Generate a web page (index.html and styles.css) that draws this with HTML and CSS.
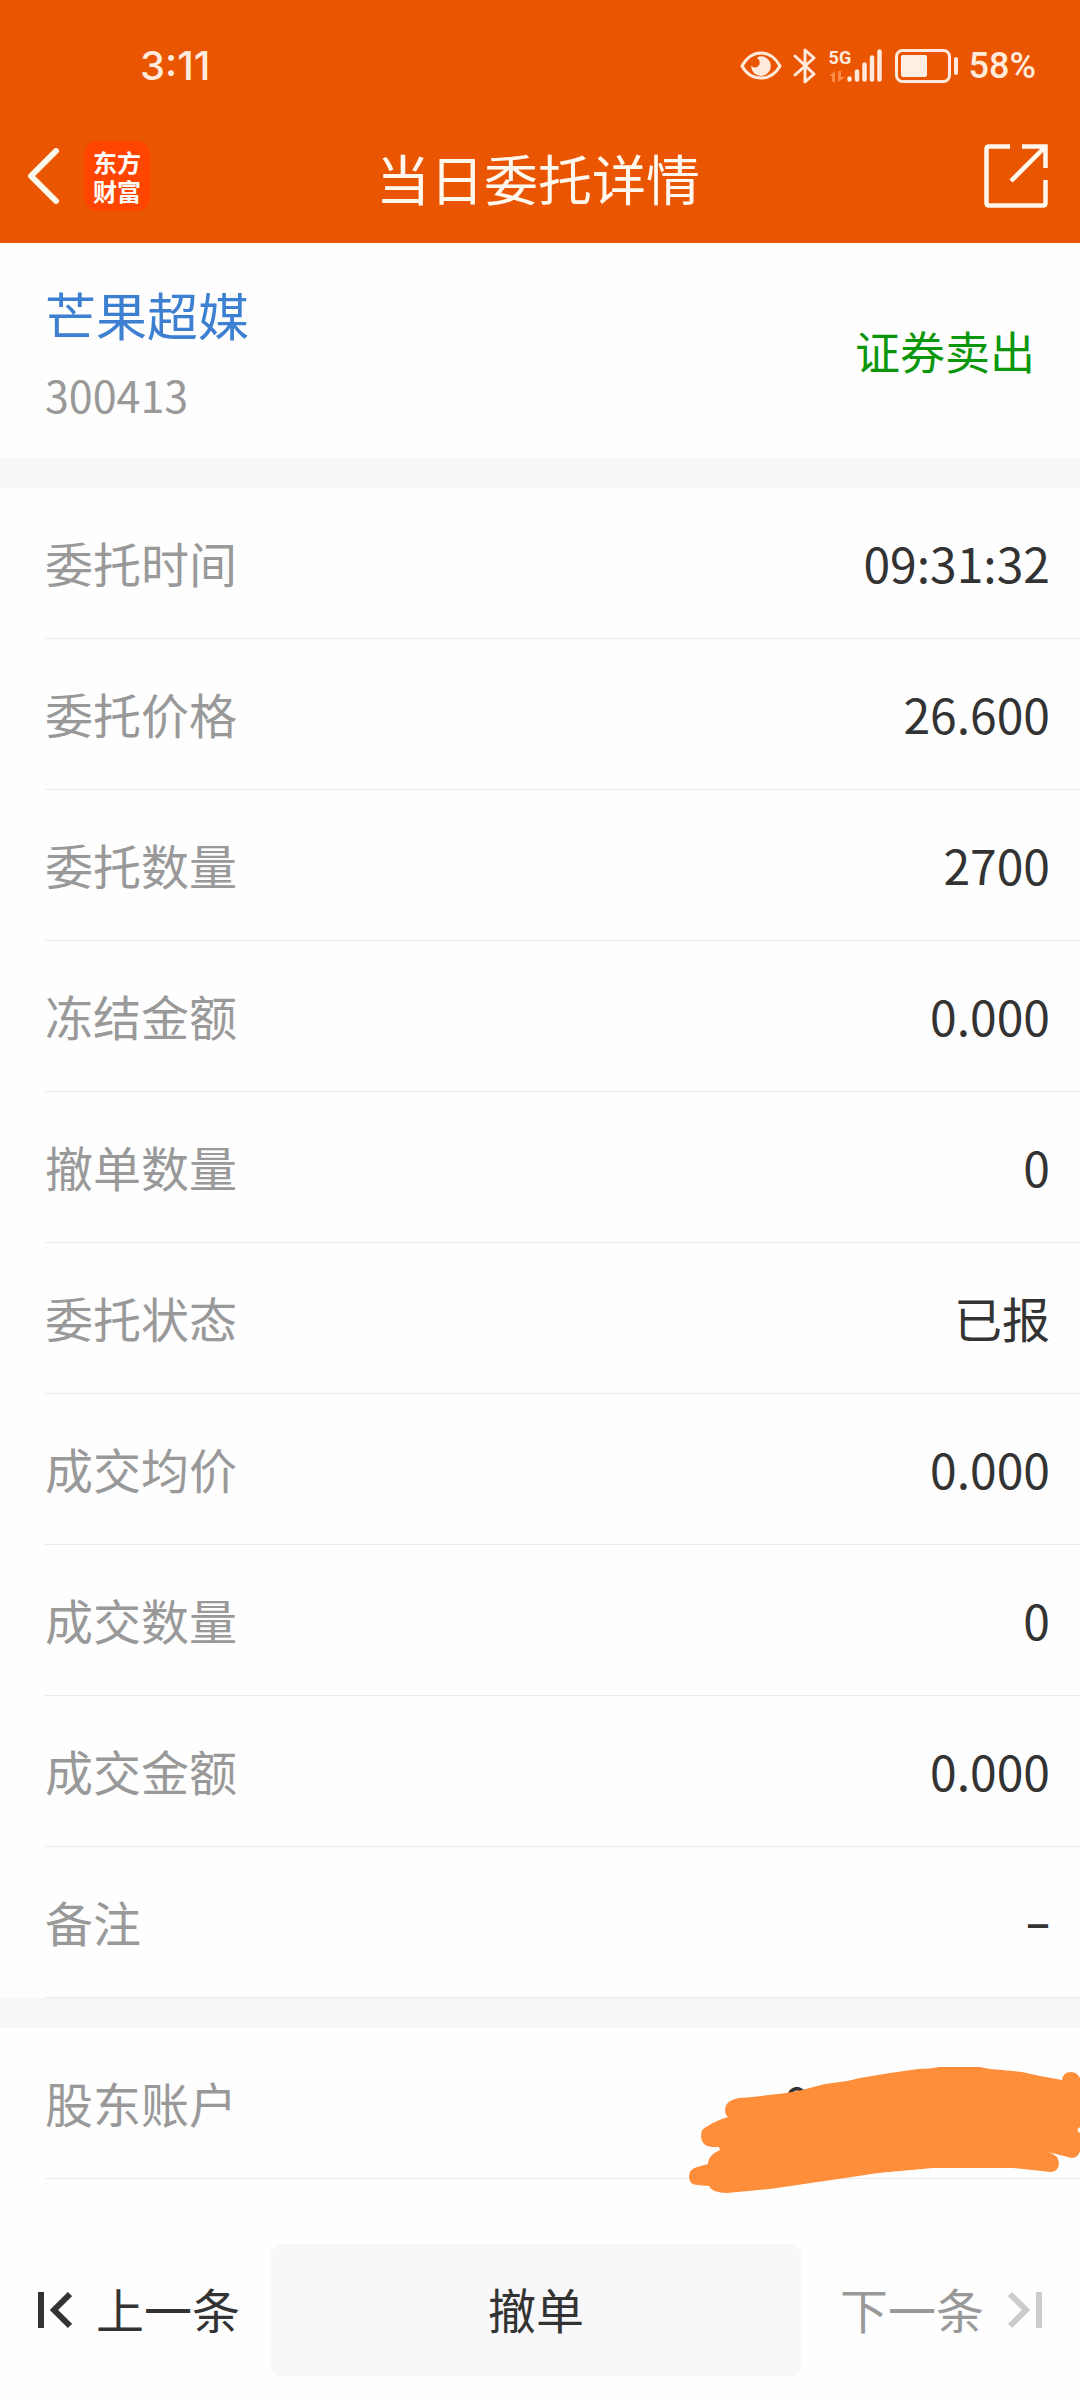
FILE: index.html
```html
<!DOCTYPE html>
<html lang="zh-CN">
<head>
<meta charset="utf-8">
<meta name="viewport" content="width=device-width, initial-scale=1">
<title>当日委托详情</title>
<link rel="stylesheet" href="styles.css">
</head>
<body>
<header class="top">
  <div class="status">
    <span class="clock">3:11</span>
    <div class="indicators">
      <svg class="eye" width="42" height="30" viewBox="0 0 42 30"><path d="M2 15C7 6 14 2 21 2s14 4 19 13c-5 9-12 12-19 12S7 24 2 15Z" fill="none" stroke="#ffeadb" stroke-width="3"/><path d="M19 5.500a9.800 9.800 0 1 1-7.800 9c2 3.500 8.500 2 8.500-2.800 0-3-1.500-4-3-4.700Z" fill="#ffeadb"/></svg>
      <svg class="bluetooth" width="24" height="38" viewBox="0 0 24 38"><path d="M2 9 21 27l-9 8V3l9 8L2 28" fill="none" stroke="#ffeadb" stroke-width="3" stroke-linejoin="round" stroke-linecap="round"/></svg>
      <div class="signal">
        <span class="network">5G</span>
        <svg width="54" height="34" viewBox="0 0 54 34"><path d="M0 27l6-5v11H3v-6Zm9-5h3v6h4l-7 5Z" fill="#ff8a4c"/><path d="M20.500 29.500v1M28 22.500v8M35.500 15.500v15M43 8.500v22M50.500 2.500v28" stroke="#ffeadb" stroke-width="4.500" stroke-linecap="round"/></svg>
      </div>
      <svg class="battery" width="64" height="34" viewBox="0 0 64 34"><rect x="1.500" y="1.500" width="53" height="31" rx="6" fill="none" stroke="#ffeadb" stroke-width="3"/><rect x="6" y="6" width="26" height="22" rx="2" fill="#ffeee4"/><path d="M61 10v14" stroke="#ffeadb" stroke-width="4" stroke-linecap="round"/></svg>
      <span class="percent">58%</span>
    </div>
  </div>
  <nav class="bar">
    <div class="bar-left">
      <button class="icon-button" type="button" aria-label="返回"><svg width="32" height="56" viewBox="0 0 32 56"><path d="M28 3 3 28l25 25" fill="none" stroke="#fff8ee" stroke-width="6" stroke-linecap="round" stroke-linejoin="round"/></svg></button>
      <span class="logo">东方<br>财富</span>
    </div>
    <h1 class="title">当日委托详情</h1>
    <button class="icon-button share" type="button" aria-label="分享"><svg width="64" height="64" viewBox="0 0 64 64"><path d="M26 2.500H5Q2.500 2.500 2.500 5v54q0 2.500 2.500 2.500h54q2.500 0 2.500-2.500V36M38 2.500h23.500V24M60 4 27 37" fill="none" stroke="#fff8ee" stroke-width="4.500"/></svg></button>
  </nav>
</header>
<main>
  <section class="summary">
    <div class="stock">
      <a class="stock-name" href="#">芒果超媒</a>
      <span class="stock-code">300413</span>
    </div>
    <span class="side">证券卖出</span>
  </section>
  <dl class="details">
    <div class="row"><dt>委托时间</dt><dd>09:31:32</dd></div>
    <div class="row"><dt>委托价格</dt><dd>26.600</dd></div>
    <div class="row"><dt>委托数量</dt><dd>2700</dd></div>
    <div class="row"><dt>冻结金额</dt><dd>0.000</dd></div>
    <div class="row"><dt>撤单数量</dt><dd>0</dd></div>
    <div class="row"><dt>委托状态</dt><dd>已报</dd></div>
    <div class="row"><dt>成交均价</dt><dd>0.000</dd></div>
    <div class="row"><dt>成交数量</dt><dd>0</dd></div>
    <div class="row"><dt>成交金额</dt><dd>0.000</dd></div>
    <div class="row"><dt>备注</dt><dd class="empty">–</dd></div>
  </dl>
  <dl class="details">
    <div class="row"><dt>股东账户</dt><dd>0000000000</dd>
      <svg class="redaction" width="392" height="128" viewBox="0 0 392 128"><path d="M51 31 64 30 99 26 114 23 137 17 159 14 172 11 202 6 230 2Q242 2 252 0H292Q303 3 314 3L334 5 352 9 374 13Q375 5 383 5 389 5 392 11V60Q387 63 392 66V84Q390 91 384 91L360 85Q371 88 371 97 370 105 362 105L354 104 325 101H245L190 106 157 111 82 122 39 126Q24 126 21 119L9 118Q1 117 1 110 1 102 9 100L20 97Q20 88 32 83L31 80H24Q13 79 13 69 13 61 20 59 27 54 40 50 37 48 37 42 38 33 51 31Z" fill="#ff8e3a"/></svg>
    </div>
  </dl>
</main>
<footer class="actions">
  <button class="step" type="button"><svg width="34" height="38" viewBox="0 0 34 38"><path d="M3 1v36M32 3 16 19l16 16" fill="none" stroke="#333" stroke-width="6"/></svg><span>上一条</span></button>
  <button class="cancel" type="button"><span>撤单</span></button>
  <button class="step step-next" type="button"><span>下一条</span><svg width="34" height="38" viewBox="0 0 34 38"><path d="M31 1v36M2 3l16 16L2 35" fill="none" stroke="#ccc" stroke-width="6"/></svg></button>
</footer>
</body>
</html>
```
FILE: styles.css
```css
* { box-sizing: border-box; }

body {
  margin: 0;
  min-height: 100vh;
  display: flex;
  flex-direction: column;
  background: #fefefe;
  color: #333;
  font-family: "Noto Sans CJK SC", sans-serif;
  font-size: 48px;
  line-height: 72px;
  overflow-x: hidden;
}

button {
  border: 0;
  padding: 0;
  background: none;
  color: inherit;
  font: inherit;
  display: flex;
  align-items: center;
}

svg { display: block; flex: none; }

.top { background: #ea5502; color: #fff8ee; }

.status {
  display: flex;
  align-items: center;
  justify-content: space-between;
  padding: 42px 44px 0 140px;
  height: 90px;
  color: #ffeadb;
  font-size: 36px;
  line-height: 48px;
}

.clock { font-family: Inter, sans-serif; font-size: 40px; font-weight: 500; }
.percent { font-family: Roboto, sans-serif; font-weight: 500; }
.indicators { display: flex; align-items: center; }
.bluetooth { margin-left: 11px; }
.signal { position: relative; margin-left: 12px; }
.network {
  position: absolute;
  left: 0;
  top: 0;
  font: 700 18px/18px "Liberation Sans Narrow", Roboto, sans-serif;
}
.battery { margin: 0 10px 0 12px; }

.bar {
  display: grid;
  grid-template-columns: 1fr auto 1fr;
  align-items: center;
  height: 153px;
  padding: 18px 32px 0 28px;
}
.bar-left { display: flex; align-items: center; gap: 24px; }
.logo {
  width: 66px;
  height: 70px;
  padding-top: 6px;
  border-radius: 14px;
  background: #ff4500;
  color: #fff;
  font-size: 24px;
  font-weight: 700;
  line-height: 29px;
  text-align: center;
}
.title { margin: 4px 0 0; font-size: 54px; font-weight: 400; line-height: 80px; }
.share { justify-self: end; }

.summary {
  display: flex;
  align-items: center;
  justify-content: space-between;
  height: 215px;
  padding: 0 45px;
}
.stock { display: flex; flex-direction: column; padding-top: 6px; }
.stock-name { color: #3d7fd0; font-size: 51px; line-height: 80px; text-decoration: none; }
.stock-code { color: #999; font-size: 43px; line-height: 80px; }
.side { color: #0c960c; font-size: 45px; }

.details { margin: 0; border-top: 30px solid #f6f7f9; }
.row {
  position: relative;
  display: flex;
  align-items: center;
  justify-content: space-between;
  height: 151px;
  padding: 0 30px 4px 45px;
}
.row::after {
  content: "";
  position: absolute;
  left: 45px;
  right: 0;
  bottom: 0;
  height: 1px;
  background: #ebebeb;
}
dt { color: #999; }
dd { margin: 0; }
.empty { font-family: "Noto Sans", sans-serif; }
.redaction { position: absolute; right: 0; top: 39px; z-index: 1; }

.actions {
  display: flex;
  align-items: center;
  margin-top: auto;
  padding: 24px 38px;
}
.actions span { padding-bottom: 4px; }
.step { gap: 24px; }
.step-next { color: #999; }
.cancel {
  flex: 1;
  justify-content: center;
  height: 132px;
  margin: 0 38px 0 30px;
  border-radius: 12px;
  background: #f8f8fa;
}
```
